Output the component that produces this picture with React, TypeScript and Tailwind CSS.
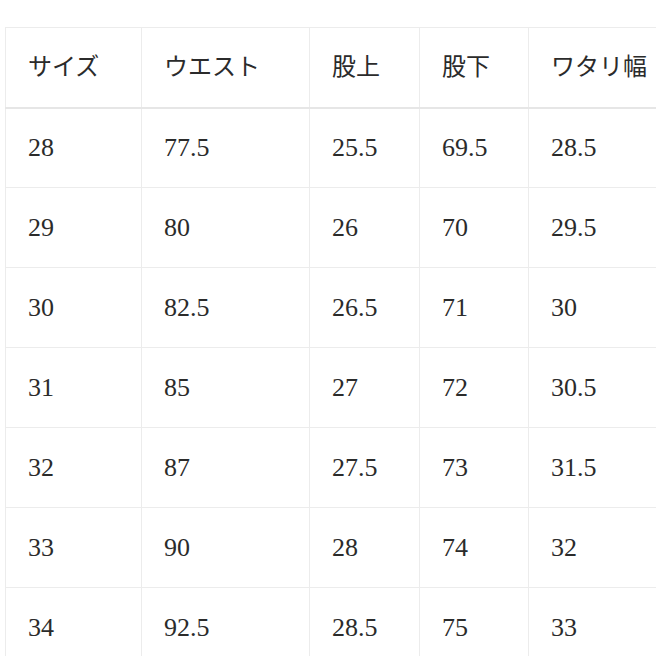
const headers = ['サイズ', 'ウエスト', '股上', '股下', 'ワタリ幅'];

const rows = [
  ['28', '77.5', '25.5', '69.5', '28.5'],
  ['29', '80', '26', '70', '29.5'],
  ['30', '82.5', '26.5', '71', '30'],
  ['31', '85', '27', '72', '30.5'],
  ['32', '87', '27.5', '73', '31.5'],
  ['33', '90', '28', '74', '32'],
  ['34', '92.5', '28.5', '75', '33'],
];

const widths = ['w-[136px]', 'w-[168px]', 'w-[110px]', 'w-[109px]', 'w-[150px]'];

export default function App() {
  return (
    <div className="w-[656px] h-[656px] overflow-hidden bg-white">
      <table
        className="mt-[27px] ml-[5px] border-collapse table-fixed w-[673px] text-[#2b2b2b]"
        style={{ fontFamily: '"Liberation Serif", "Noto Sans CJK JP", serif' }}
      >
        <colgroup>
          {widths.map((w, i) => (
            <col key={i} className={w} />
          ))}
        </colgroup>
        <thead>
          <tr className="h-[80px] border-b-2 border-[#e6e6e6]">
            {headers.map((h) => (
              <th
                key={h}
                className="border border-[#ececec] pl-[22px] text-left font-normal text-[24px] whitespace-nowrap"
              >
                {h}
              </th>
            ))}
          </tr>
        </thead>
        <tbody>
          {rows.map((r) => (
            <tr key={r[0]} className="h-[80px]">
              {r.map((c, i) => (
                <td
                  key={i}
                  className="border border-[#ececec] pl-[22px] text-left text-[26px] whitespace-nowrap"
                >
                  {c}
                </td>
              ))}
            </tr>
          ))}
        </tbody>
      </table>
    </div>
  );
}
